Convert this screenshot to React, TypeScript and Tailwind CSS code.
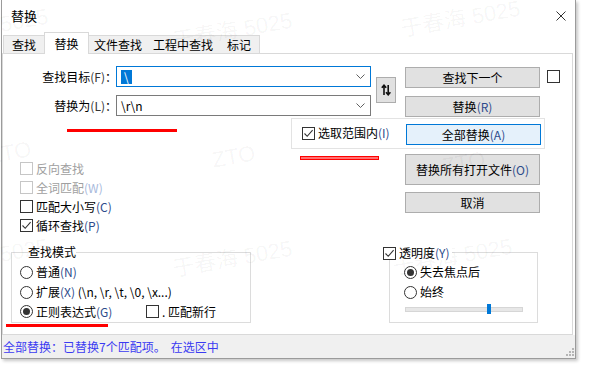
import React from "react";

function Key({ k, dim }: { k: string; dim?: boolean }) {
  return <span className={dim ? "text-[#a7b9dc]" : "text-[#2d4b8b]"}>({k})</span>;
}

function Check({ checked, disabled }: { checked?: boolean; disabled?: boolean }) {
  return (
    <span
      className={
        disabled
          ? "flex h-[13px] w-[13px] shrink-0 items-center justify-center border border-[#c6c6c6] bg-white"
          : "flex h-[13px] w-[13px] shrink-0 items-center justify-center border border-[#333333] bg-white"
      }
    >
      {checked && (
        <svg width="11" height="11" viewBox="0 0 11 11">
          <path d="M1.5 5.5 L4.2 8.3 L9.6 2.2" fill="none" stroke="#333" strokeWidth="1.1" />
        </svg>
      )}
    </span>
  );
}

function Radio({ on }: { on?: boolean }) {
  return (
    <span className="flex h-[13px] w-[13px] shrink-0 items-center justify-center rounded-full border border-[#333333] bg-white">
      {on && <span className="h-[7px] w-[7px] rounded-full bg-[#333333]" />}
    </span>
  );
}

function Btn({ children, tall, primary }: { children: React.ReactNode; tall?: boolean; primary?: boolean }) {
  const size = tall ? "h-[31px]" : "h-[21px]";
  const look = primary ? "border-[#0078d7] bg-[#e5f1fb]" : "border-[#adadad] bg-[#e1e1e1]";
  return (
    <div className={`flex w-[135px] shrink-0 items-center justify-center border ${size} ${look}`}>
      {children}
    </div>
  );
}

function Combo({ active, children }: { active?: boolean; children: React.ReactNode }) {
  return (
    <div
      className={
        active
          ? "flex h-[21px] w-[255px] items-center justify-between border border-[#0078d7] bg-white pl-[4px] pr-[5px]"
          : "flex h-[21px] w-[255px] items-center justify-between border border-[#7a7a7a] bg-white pl-[4px] pr-[5px]"
      }
    >
      <div className="flex items-center">{children}</div>
      <svg width="9" height="5" viewBox="0 0 9 5">
        <path d="M0.5 0.5 L4.5 4.5 L8.5 0.5" fill="none" stroke="#606060" strokeWidth="1" />
      </svg>
    </div>
  );
}

function Row({ children }: { children: React.ReactNode }) {
  return <div className="flex h-[19px] items-center gap-[3px]">{children}</div>;
}

const tabs = [
  { name: "查找", w: "w-[41px]" },
  { name: "替换", w: "w-[45px]", on: true },
  { name: "文件查找", w: "w-[58px]" },
  { name: "工程中查找", w: "w-[72px]" },
  { name: "标记", w: "w-[41px]" },
];

const marks = [
  { t: "于春海 5025", c: "left-[-72px] top-[14px]" },
  { t: "于春海 5025", c: "left-[172px] top-[18px]" },
  { t: "于春海 5025", c: "left-[400px] top-[6px]" },
  { t: "ZTO", c: "left-[-12px] top-[140px]" },
  { t: "ZTO", c: "left-[212px] top-[144px]" },
  { t: "ZTO", c: "left-[442px] top-[150px]" },
  { t: "于春海 5025", c: "left-[-72px] top-[244px]" },
  { t: "于春海 5025", c: "left-[172px] top-[246px]" },
  { t: "于春海 5025", c: "left-[392px] top-[244px]" },
];

export default function App() {
  return (
    <div className="relative h-[366px] w-[597px] overflow-hidden bg-white font-['Noto_Sans_CJK_SC','Noto_Sans',sans-serif] text-[12px] leading-[14px] text-black">
      <div className="ml-[1px] flex h-[359px] w-[575px] flex-col border-x border-b border-[#9b9b9b] bg-white shadow-[2px_2px_3px_rgba(0,0,0,0.22)]">
        {/* title bar */}
        <div className="flex h-[32px] shrink-0 items-center justify-between pl-[9px] pr-[9px]">
          <span className="text-[13px]">替换</span>
          <svg width="10" height="10" viewBox="0 0 10 10">
            <path d="M0.5 0.5 L9.5 9.5 M9.5 0.5 L0.5 9.5" stroke="#333" strokeWidth="1" />
          </svg>
        </div>

        {/* tabs */}
        <div className="flex h-[21px] shrink-0 items-end pl-[1px]">
          {tabs.map((t, i) =>
            t.on ? (
              <div
                key={t.name}
                className={`relative z-10 -mb-[1px] flex h-[22px] items-center justify-center border-x border-t border-[#d9d9d9] bg-white ${t.w}`}
              >
                {t.name}
              </div>
            ) : (
              <div
                key={t.name}
                className={`flex h-[18px] items-center justify-center border-t border-[#d9d9d9] bg-[#f0f0f0] ${t.w} ${
                  i === tabs.length - 1 ? "border-r" : ""
                } ${i === 0 ? "border-l" : ""}`}
              >
                {t.name}
              </div>
            )
          )}
        </div>

        {/* tab panel */}
        <div className="h-[282px] w-[571px] shrink-0 border border-[#d9d9d9]">
          {/* row 1 */}
          <div className="mt-[12px] flex">
            <div className="flex w-[114px] flex-col gap-[8px]">
              <div className="flex h-[21px] items-center justify-end">
                查找目标<span className="text-[#333]">(F)</span>：
              </div>
              <div className="flex h-[21px] items-center justify-end">
                替换为<span className="text-[#333]">(L)</span>：
              </div>
            </div>
            <div className="-ml-[1px] flex flex-col gap-[8px]">
              <Combo active>
                <span className="bg-[#0078d7] px-[3px] text-white">\</span>
              </Combo>
              <Combo>
                <span>\r\n</span>
              </Combo>
            </div>
            <div className="ml-[5px] mt-[11px] flex h-[26px] w-[20px] items-center justify-center border border-[#adadad] bg-[#e1e1e1]">
              <svg width="10" height="12" viewBox="0 0 10 12">
                <path d="M3 11 V1.5 M0.8 3.8 L3 1.2 L5.2 3.8" fill="none" stroke="#111" strokeWidth="1.6" />
                <path d="M7.2 1 V10.5 M5 8.2 L7.2 10.8 L9.4 8.2" fill="none" stroke="#111" strokeWidth="1.6" />
              </svg>
            </div>
            <div className="ml-[9px] mt-[1px] flex flex-col gap-[8px]">
              <Btn>查找下一个</Btn>
              <Btn>
                替换<Key k="R" />
              </Btn>
            </div>
            <div className="ml-[7px] mt-[4px]">
              <Check />
            </div>
          </div>

          {/* row 2: in selection */}
          <div className="ml-[288px] mt-[1px] flex h-[31px] w-[254px] items-start border border-[#e3e3e3] pl-[10px] pr-[3px] pt-[5px]">
            <div className="mt-[2px] flex items-center gap-[3px]">
              <Check checked />
              <span>
                选取范围内<Key k="I" />
              </span>
            </div>
            <div className="ml-auto">
              <Btn primary>
                全部替换<Key k="A" />
              </Btn>
            </div>
          </div>

          {/* row 3 */}
          <div className="flex h-[96px]">
            <div className="w-[402px] pl-[17px] pt-[10px]">
              <Row>
                <Check disabled />
                <span className="text-[#a0a0a0]">反向查找</span>
              </Row>
              <Row>
                <Check disabled />
                <span className="text-[#a0a0a0]">
                  全词匹配<Key k="W" dim />
                </span>
              </Row>
              <Row>
                <Check />
                <span>
                  匹配大小写<Key k="C" />
                </span>
              </Row>
              <Row>
                <Check checked />
                <span>
                  循环查找<Key k="P" />
                </span>
              </Row>
            </div>
            <div className="flex flex-col gap-[7px] pt-[5px]">
              <Btn tall>
                替换所有打开文件<Key k="O" />
              </Btn>
              <Btn>取消</Btn>
            </div>
          </div>

          {/* row 4 */}
          <div className="flex pl-[8px]">
            <fieldset className="h-[78px] w-[240px] border border-[#dcdcdc] pl-[8px]">
              <legend className="ml-[8px] px-0 leading-[14px]">查找模式</legend>
              <div className="mt-[3px] flex h-[20px] items-center gap-[3px]">
                <Radio />
                <span>
                  普通<Key k="N" />
                </span>
              </div>
              <div className="flex h-[20px] items-center gap-[3px]">
                <Radio />
                <span>
                  扩展<Key k="X" /> (\n, \r, \t, \0, \x...)
                </span>
              </div>
              <div className="flex h-[19px] items-center gap-[3px]">
                <Radio on />
                <span className="w-[107px]">
                  正则表达式<Key k="G" />
                </span>
                <Check />
                <span>. 匹配新行</span>
              </div>
            </fieldset>

            <div className="ml-[132px] mt-[1px]">
              <div className="relative z-10 flex h-[14px] w-fit items-center gap-[3px] bg-white pr-[2px]">
                <Check checked />
                <span>
                  透明度<Key k="Y" />
                </span>
              </div>
              <div className="-mt-[8px] ml-[6px] h-[71px] w-[149px] border border-[#dcdcdc] pl-[14px] pt-[9px]">
                <div className="flex h-[20px] items-center gap-[3px]">
                  <Radio on />
                  <span>失去焦点后</span>
                </div>
                <div className="flex h-[20px] items-center gap-[3px]">
                  <Radio />
                  <span>始终</span>
                </div>
                <div className="relative ml-[1px] mt-[5px] h-[5px] w-[118px] border border-[#d6d6d6] bg-[#e7e7e7]">
                  <div className="absolute left-[81px] top-[-4px] h-[10px] w-[4px] bg-[#0078d7]" />
                </div>
              </div>
            </div>
          </div>
        </div>

        {/* status bar */}
        <div className="relative flex flex-1 items-center bg-[#f0f0f0] pl-[1px] text-[#3b3bf2]">
          <span>全部替换：已替换7个匹配项。</span>
          <span className="ml-[5px]">在选区中</span>
          <svg className="absolute bottom-[2px] right-[1px]" width="9" height="9" viewBox="0 0 9 9">
            <rect x="7" y="1" width="2" height="2" fill="#b5b5b5" />
            <rect x="4" y="4" width="2" height="2" fill="#b5b5b5" />
            <rect x="7" y="4" width="2" height="2" fill="#b5b5b5" />
            <rect x="1" y="7" width="2" height="2" fill="#b5b5b5" />
            <rect x="4" y="7" width="2" height="2" fill="#b5b5b5" />
            <rect x="7" y="7" width="2" height="2" fill="#b5b5b5" />
          </svg>
        </div>
      </div>

      {/* annotation lines */}
      <div className="absolute left-[67px] top-[129px] h-[3px] w-[110px] bg-[#ff0000]" />
      <div className="absolute left-[300px] top-[156px] h-[4px] w-[79px] border border-[#ff0000] bg-[#ff7070]" />
      <div className="absolute left-[6px] top-[324px] h-[3px] w-[102px] bg-[#ff0000]" />

      {/* watermarks */}
      {marks.map((m, i) => (
        <span
          key={i}
          className={`pointer-events-none absolute -rotate-[10deg] whitespace-nowrap font-['Liberation_Sans','Noto_Sans_CJK_SC',sans-serif] text-[22px] leading-[26px] text-black/[0.045] ${m.c}`}
        >
          {m.t}
        </span>
      ))}
    </div>
  );
}
